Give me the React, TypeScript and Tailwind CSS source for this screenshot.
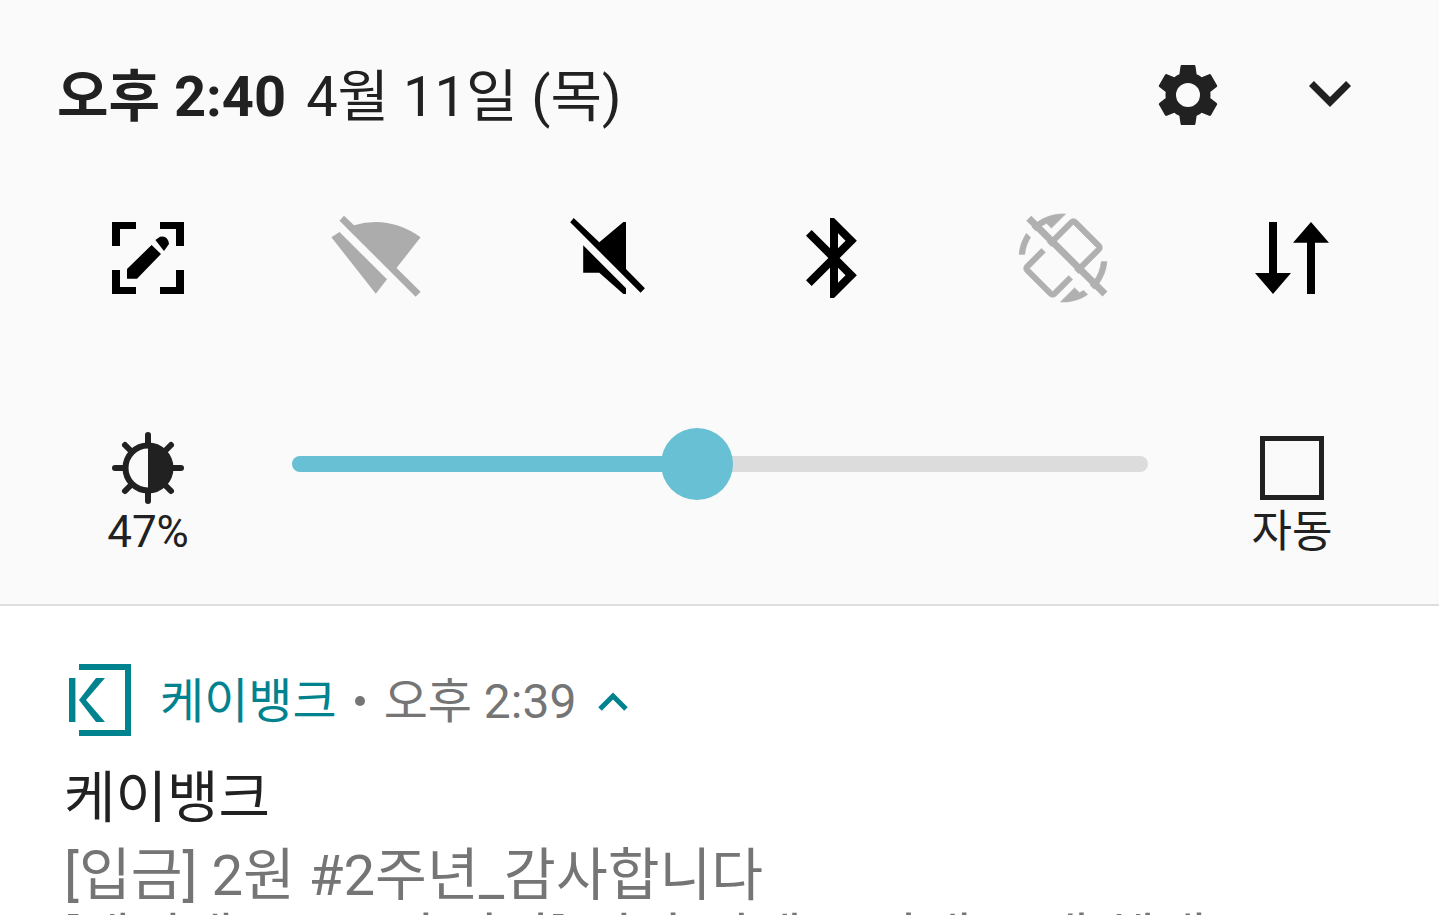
const kr = { fontFamily: 'Roboto, "Noto Sans CJK KR", sans-serif' };

function FrameEdit() {
  return (
    <svg width="96" height="96" viewBox="0 0 96 96" fill="#000">
      <path d="M12 12H36V19H20V36H12ZM60 12H84V36H76V19H60ZM12 60H20V77H36V84H12ZM76 60H84V84H60V77H76Z" />
      <path d="M27 68.7V59L51.6 35 61 44 37 68.7ZM55.4 30 60 26.7Q68 25 69 34L64 41Z" />
    </svg>
  );
}
function WifiOff() {
  return (
    <svg width="96" height="96" viewBox="0 0 96 96" fill="#acacac">
      <path d="M10.5 10.7 15 5.7 25 15.3Q60 5 91.6 27.3L67.5 58 91.6 81.7 86.6 86.7Z" />
      <path d="M2.4 27.3 10.5 22 58 69.3 46.8 83.7Z" />
    </svg>
  );
}
function Mute() {
  return (
    <svg width="96" height="96" viewBox="-2 0 96 96" fill="#000">
      <path d="M10.2 12.3 13.7 8 39.3 32.3 63.4 12H66V59L84.9 78.3 80.6 82.7Z" />
      <path d="M23.2 35.3 66 78.3V84H63.4L39.3 62.7H23.2Z" />
    </svg>
  );
}
function Bluetooth() {
  return (
    <svg width="96" height="96" viewBox="0 0 24 24" fill="#000">
      <path d="M17.71 7.71L12 2h-1v7.59L6.41 5 5 6.41 10.59 12 5 17.59 6.41 19 11 14.41V22h1l5.71-5.71-4.3-4.29 4.3-4.29zM13 5.83l1.88 1.88L13 9.59V5.83zm1.88 10.46L13 18.17v-3.76l1.88 1.88z" />
    </svg>
  );
}
function RotationOff() {
  return (
    <svg width="96" height="96" viewBox="0 0 96 96" fill="#b0b0b0">
      <mask id="rotcut" maskUnits="userSpaceOnUse" x="0" y="0" width="96" height="96">
        <rect width="96" height="96" fill="#fff" />
        <path d="M6 12 86 92" stroke="#000" strokeWidth="8" />
      </mask>
      <g mask="url(#rotcut)">
        <path
          transform="translate(92 4) scale(-3.667 3.667)"
          stroke="#b0b0b0"
          strokeWidth="0.2"
          d="M16.48 2.52c3.27 1.55 5.61 4.72 5.97 8.48h1.5C23.44 4.84 18.29 0 12 0l-.66.03 3.81 3.81 1.33-1.32zm-6.25-.77c-.59-.59-1.54-.59-2.12 0L1.75 8.11c-.59.59-.59 1.54 0 2.12l12.02 12.02c.59.59 1.54.59 2.12 0l6.36-6.36c.59-.59.59-1.54 0-2.12L10.23 1.75zm4.6 19.44L2.81 9.17l6.36-6.36 12.02 12.02-6.36 6.36zm-7.31.29C4.25 19.94 1.91 16.76 1.55 13H.05C.56 19.16 5.71 24 12 24l.66-.03-3.81-3.81-1.33 1.32z"
        />
      </g>
      <path d="M13.8 8.3 90 84" stroke="#b0b0b0" strokeWidth="7" fill="none" />
    </svg>
  );
}
function SwapArrows() {
  return (
    <svg width="96" height="96" viewBox="0 0 96 96" fill="#000">
      <path d="M25 12H33V63H47L29 84 11 63H25Z" />
      <path d="M67 12 85 32.7H71V84H63V32.7H49Z" />
    </svg>
  );
}
function Gear() {
  return (
    <svg width="72" height="72" viewBox="0 0 24 24" fill="#212121" fillRule="evenodd">
      <path d="M19.43 12.98c.04-.32.07-.64.07-.98s-.03-.66-.07-.98l2.11-1.65c.19-.15.24-.42.12-.64l-2-3.46c-.12-.22-.39-.3-.61-.22l-2.49 1c-.52-.4-1.08-.73-1.69-.98l-.38-2.65C14.46 2.18 14.25 2 14 2h-4c-.25 0-.46.18-.49.42l-.38 2.65c-.61.25-1.17.59-1.69.98l-2.49-1c-.23-.09-.49 0-.61.22l-2 3.46c-.13.22-.07.49.12.64l2.11 1.65c-.04.32-.07.65-.07.98s.03.66.07.98l-2.11 1.65c-.19.15-.24.42-.12.64l2 3.46c.12.22.39.3.61.22l2.49-1c.52.4 1.08.73 1.69.98l.38 2.65c.03.24.24.42.49.42h4c.25 0 .46-.18.49-.42l.38-2.65c.61-.25 1.17-.59 1.69-.98l2.49 1c.23.09.49 0 .61-.22l2-3.46c.12-.22.07-.49-.12-.64l-2.11-1.65zM12 16a4 4 0 1 1 0-8 4 4 0 0 1 0 8z" />
    </svg>
  );
}
function Brightness() {
  return (
    <svg width="72" height="72" viewBox="0 0 72 72" stroke="#212121" fill="none">
      <g strokeWidth="6" strokeLinecap="round">
        <path d="M36 3V12M36 60V69M3 36H12M60 36H69M13 13 19 19M59 13 53 19M13 59 19 53M59 59 53 53" />
      </g>
      <circle cx="36" cy="36" r="22.5" strokeWidth="6" />
      <path d="M36 13.5A22.5 22.5 0 0 1 36 58.5Z" fill="#212121" stroke="none" />
    </svg>
  );
}
function KLogo() {
  return (
    <svg width="64" height="72" viewBox="0 0 64 72" fill="#00838f">
      <path d="M11 0H63V72H11V66H57V6H11Z" />
      <path d="M1 14H7.4V58H1Z" />
      <path d="M28 14H37L18 36 37 58H28L11 36Z" />
    </svg>
  );
}

export default function App() {
  return (
    <div className="h-[915px] w-full overflow-hidden bg-white" style={kr}>
      <div className="h-[606px] border-b-2 border-[#dedede] bg-[#fafafa]">
        <header className="flex h-[190px] items-center justify-between pl-[57px] pr-[67px]">
          <div className="whitespace-nowrap pt-[4px] text-[56px] leading-none text-[#212121]">
            <span className="font-bold">오후 2:40</span>
            <span className="ml-[20px]">4월 11일 (목)</span>
          </div>
          <div className="flex items-center gap-[64px]">
            <Gear />
            <svg className="mb-[4px]" width="84" height="84" viewBox="0 0 24 24" fill="#212121">
              <path d="M16.59 8.59 12 13.17 7.41 8.59 6 10l6 6 6-6z" />
            </svg>
          </div>
        </header>

        <div className="flex h-[136px] items-center justify-between pl-[100px] pr-[99px]">
          <FrameEdit />
          <WifiOff />
          <Mute />
          <Bluetooth />
          <RotationOff />
          <SwapArrows />
        </div>

        <div className="flex items-start pl-[100px] pr-[99px] pt-[102px]">
          <div className="flex w-[96px] flex-col items-center pt-[4px]">
            <Brightness />
            <span className="text-[44px] leading-[56px] text-[#212121]">47%</span>
          </div>
          <div className="ml-[96px] flex h-[72px] w-[856px] items-center">
            <div className="h-[16px] w-[370px] rounded-l-full bg-[#67c0d3]" />
            <div className="z-10 -mx-[1px] h-[72px] w-[72px] shrink-0 rounded-full bg-[#67c0d3]" />
            <div className="h-[16px] flex-1 rounded-r-full bg-[#dcdcdc]" />
          </div>
          <div className="ml-[96px] flex w-[96px] flex-col items-center pt-[8px]">
            <div className="h-[64px] w-[64px] border-[5px] border-[#212121]" />
            <span className="whitespace-nowrap text-[44px] leading-[64px] text-[#212121]">자동</span>
          </div>
        </div>
      </div>

      <section className="pl-[68px] pt-[58px]">
        <div className="flex h-[72px] items-center">
          <KLogo />
          <span className="ml-[28px] pt-[4px] text-[48px] leading-none text-[#00838f]">케이뱅크</span>
          <span className="ml-[18px] mt-[2px] h-[10px] w-[10px] rounded-full bg-[#757575]" />
          <span className="ml-[19px] pt-[4px] text-[48px] leading-none text-[#757575]">오후 2:39</span>
          <svg className="ml-[21px] mt-[4px]" width="32" height="20" viewBox="0 0 32 20" fill="none" stroke="#00838f" strokeWidth="5">
            <path d="M3 17 16 4 29 17" />
          </svg>
        </div>
        <div className="-ml-[4px] mt-[24px] text-[56px] leading-[76px] text-[#212121]">케이뱅크</div>
        <div className="-ml-[4px] mt-[8px] whitespace-nowrap text-[56.3px] leading-[65px] text-[#757575]">[입금] 2원 #2주년_감사합니다</div>
        <div className="-ml-[4px] whitespace-nowrap text-[56.3px] leading-[65px] text-[#757575]">[케이뱅크 2주년 감사] 이자 이벤트 안내 고객 혜택</div>
      </section>
    </div>
  );
}
